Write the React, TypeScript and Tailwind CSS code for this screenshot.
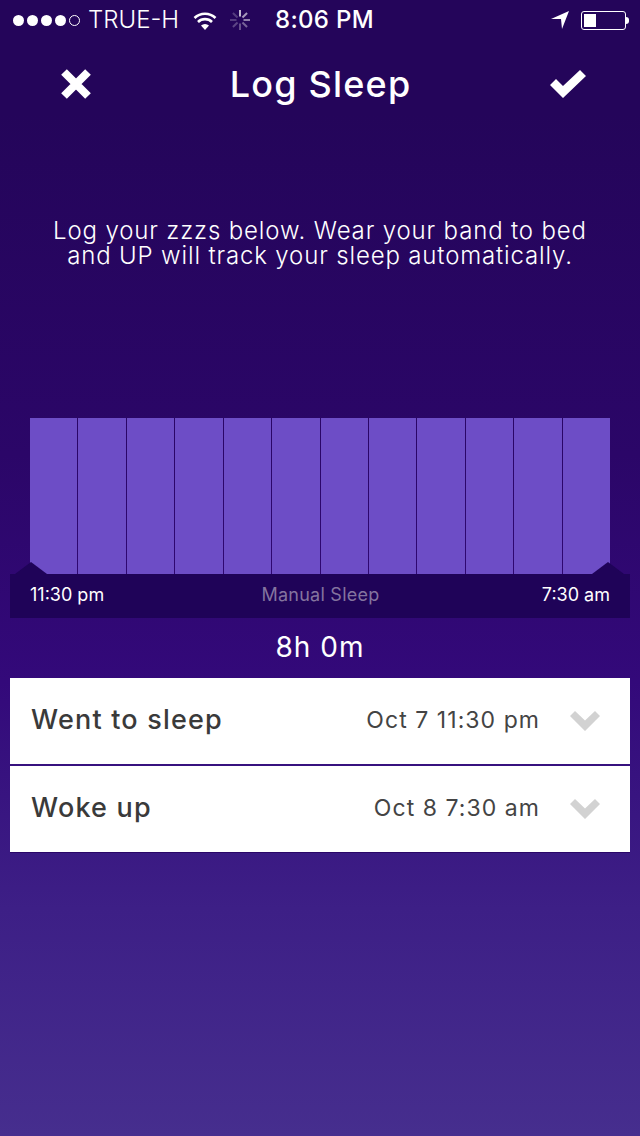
// App.tsx
const font = { fontFamily: "Inter, 'Liberation Sans', sans-serif" };

const cells = Array.from({ length: 12 }, (_, i) => i);

function Chevron() {
  return (
    <svg width="30" height="20" viewBox="0 0 30 20" className="shrink-0">
      <path d="M0 5 L5 0 L15 9.5 L25 0 L30 5 L15 20 Z" fill="#d2d2d2" />
    </svg>
  );
}

function Spinner() {
  const spokes = [0, 45, 90, 135, 180, 225, 270, 315];
  const opacities = [0.95, 0.8, 0.65, 0.5, 0.4, 0.35, 0.3, 0.3];
  return (
    <svg width="20" height="20" viewBox="0 0 20 20">
      {spokes.map((a, i) => (
        <rect key={a} x="9" y="0" width="2" height="6.5" fill="#fff" opacity={opacities[i] * 0.75} transform={`rotate(${a} 10 10)`} />
      ))}
    </svg>
  );
}

function Row({ label, value }: { label: string; value: string }) {
  return (
    <div className="h-[86px] bg-white flex items-center pl-[21px] pr-[30px]">
      <span className="text-[27px] font-medium text-[#3a3a3a] flex-1 tracking-[1.2px] pb-[2px]">{label}</span>
      <span className="text-[23px] text-[#444] mr-[30px] tracking-[1.05px] pb-[2px]">{value}</span>
      <Chevron />
    </div>
  );
}

export default function App() {
  return (
    <div
      style={font}
      className="w-[640px] h-[1136px] overflow-hidden bg-[linear-gradient(180deg,#24055a_0%,#24055a_10%,#2b0668_40%,#33097a_60%,#3d1f86_80%,#462e8e_100%)] text-white"
    >
      {/* status bar */}
      <div className="h-10 flex items-center relative pl-[13px] pr-[11px]">
        <div className="flex gap-[3px]">
          <span className="w-[11px] h-[11px] rounded-full bg-white" />
          <span className="w-[11px] h-[11px] rounded-full bg-white" />
          <span className="w-[11px] h-[11px] rounded-full bg-white" />
          <span className="w-[11px] h-[11px] rounded-full bg-white" />
          <span className="w-[11px] h-[11px] rounded-full border border-white" />
        </div>
        <span className="ml-[8px] text-[24px] leading-none font-light">TRUE-H</span>
        <svg width="24" height="19" viewBox="0 0 24 19" className="ml-[14px]">
          <path d="M12 19 L8 14.5 A6 6 0 0 1 16 14.5 Z" fill="#fff" />
          <path d="M5 11 A10 10 0 0 1 19 11" fill="none" stroke="#fff" strokeWidth="2.6" />
          <path d="M1.5 7 A15 15 0 0 1 22.5 7" fill="none" stroke="#fff" strokeWidth="2.6" />
        </svg>
        <span className="ml-[13px] flex"><Spinner /></span>
        <span className="ml-[25px] text-[24px] leading-none font-medium tracking-[0.3px]">8:06 PM</span>
        <svg width="18" height="18" viewBox="0 0 18 18" className="ml-auto mr-[12px]">
          <path d="M0 8 L18 0 L11 18 L10 8 Z" fill="#fff" />
        </svg>
        <div className="w-[45px] h-[19px] rounded-[3px] border border-white p-[2px]">
          <div className="w-[12px] h-full bg-white" />
        </div>
        <div className="w-[3px] h-[7px] bg-white rounded-r-sm" />
      </div>

      {/* nav */}
      <div className="h-[88px] flex items-center justify-between pl-[61px] pr-[54px]">
        <svg width="30" height="30" viewBox="0 0 30 30">
          <path d="M3 3 L27 27 M27 3 L3 27" stroke="#fff" strokeWidth="8" />
        </svg>
        <h1 className="text-[36px] font-medium leading-none tracking-[1.2px]">Log Sleep</h1>
        <svg width="36" height="28" viewBox="0 0 36 28">
          <path d="M0 15 L6 9 L13 16 L30 0 L36 6 L13 28 Z" fill="#fff" />
        </svg>
      </div>

      {/* intro */}
      <p className="mt-[90px] text-center text-[24px] leading-[25px] font-light tracking-[0.85px]">
        Log your zzzs below. Wear your band to bed
        <br />
        and UP will track your sleep automatically.
      </p>

      {/* sleep chart */}
      <div className="mt-[150px] mx-[10px] relative">
        <div className="mx-5 h-[156px] grid grid-cols-12 gap-px">
          {cells.map((c) => (
            <div key={c} className="bg-[#6d4dc6]" />
          ))}
        </div>
        <div className="h-11 bg-[#1f0358] flex items-center justify-between px-5 text-[18px] pb-[3px]">
          <span>11:30 pm</span>
          <span className="text-[#84749f] tracking-[0.25px] -ml-[5px]">Manual Sleep</span>
          <span>7:30 am</span>
        </div>
        <div className="absolute left-[5px] top-[144px] w-0 h-0 border-x-[16px] border-x-transparent border-b-[12px] border-b-[#1f0358]" />
        <div className="absolute right-[6px] top-[144px] w-0 h-0 border-x-[16px] border-x-transparent border-b-[12px] border-b-[#1f0358]" />
      </div>

      <div className="h-[60px] flex items-center justify-center text-[28px] tracking-[1px] pb-[2px]">8h 0m</div>

      {/* times */}
      <div className="mx-[10px] flex flex-col gap-[2px] border-b border-[#2a0668]">
        <Row label="Went to sleep" value="Oct 7 11:30 pm" />
        <Row label="Woke up" value="Oct 8 7:30 am" />
      </div>
    </div>
  );
}
